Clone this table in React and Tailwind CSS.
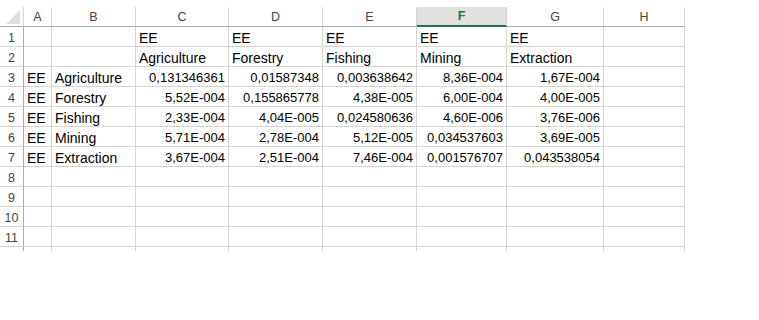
import React from "react";

const cols = ["A", "B", "C", "D", "E", "F", "G", "H"];

const rows = [
  ["", "", "EE", "EE", "EE", "EE", "EE", ""],
  ["", "", "Agriculture", "Forestry", "Fishing", "Mining", "Extraction", ""],
  ["EE", "Agriculture", "0,131346361", "0,01587348", "0,003638642", "8,36E-004", "1,67E-004", ""],
  ["EE", "Forestry", "5,52E-004", "0,155865778", "4,38E-005", "6,00E-004", "4,00E-005", ""],
  ["EE", "Fishing", "2,33E-004", "4,04E-005", "0,024580636", "4,60E-006", "3,76E-006", ""],
  ["EE", "Mining", "5,71E-004", "2,78E-004", "5,12E-005", "0,034537603", "3,69E-005", ""],
  ["EE", "Extraction", "3,67E-004", "2,51E-004", "7,46E-004", "0,001576707", "0,043538054", ""],
  ["", "", "", "", "", "", "", ""],
  ["", "", "", "", "", "", "", ""],
  ["", "", "", "", "", "", "", ""],
  ["", "", "", "", "", "", "", ""],
];

const isNum = (v) => /^[0-9]/.test(v);

const App = () => {
  return (
    <div
      className="w-[759px] h-[320px] bg-white overflow-hidden"
      style={{ fontFamily: "'Liberation Sans', Arial, sans-serif" }}
    >
      <div className="h-[7px]" />
      <div className="grid grid-cols-[24px_28px_84px_93px_94px_94px_90px_97px_81px] w-[685px]">
        {/* corner */}
        <div className="h-[20px] border-r border-b border-r-[#d4d4d4] border-b-[#ababab] relative">
          <svg width="23" height="19" className="absolute left-0 top-0">
            <polygon points="20,3 20,17 6,17" fill="#dfdfdf" />
          </svg>
        </div>
        {cols.map((c) =>
          c === "F" ? (
            <div
              key={c}
              className="h-[20px] bg-[#e1e1e1] border-r border-r-[#d4d4d4] border-b-2 border-b-[#217346] flex items-center justify-center text-[12.5px] font-bold text-[#217346] leading-none pt-[1px]"
            >
              {c}
            </div>
          ) : (
            <div
              key={c}
              className="h-[20px] border-r border-b border-r-[#d4d4d4] border-b-[#ababab] flex items-center justify-center text-[12.5px] text-[#444444] leading-none pt-[1px]"
            >
              {c}
            </div>
          )
        )}
        {rows.map((r, i) => (
          <React.Fragment key={i}>
            <div className="h-[20px] border-r border-b border-r-[#ababab] border-b-[#d4d4d4] flex items-end justify-center text-[12.5px] text-[#444444] leading-[15px]">
              {i + 1}
            </div>
            {r.map((v, j) => (
              <div
                key={j}
                className={
                  "h-[20px] border-r border-b border-[#d4d4d4] flex items-end whitespace-nowrap text-black px-[3px] " +
                  (isNum(v)
                    ? "justify-end text-[13px] leading-[16px]"
                    : "justify-start text-[14px] leading-[16px]")
                }
              >
                {v}
              </div>
            ))}
          </React.Fragment>
        ))}
        <div className="h-[4px] border-r border-r-[#ababab]" />
        {cols.map((c) => (
          <div key={c} className="h-[4px] border-r border-r-[#d4d4d4]" />
        ))}
      </div>
    </div>
  );
};

export default App;
